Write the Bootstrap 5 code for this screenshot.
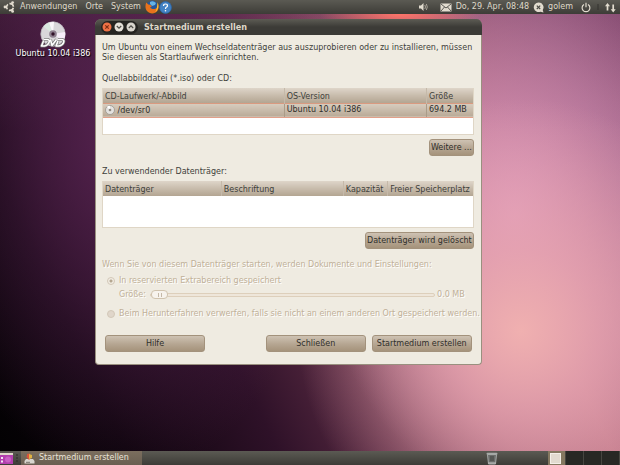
<!DOCTYPE html>
<html lang="de">
<head>
<meta charset="utf-8">
<meta name="viewport" content="width=device-width, initial-scale=1">
<title>Startmedium erstellen</title>
<link href="https://cdn.jsdelivr.net/npm/bootstrap@5.3.0/dist/css/bootstrap.min.css" rel="stylesheet">
<style>
body{font-family:"DejaVu Sans",sans-serif;font-size:8px;line-height:10px;color:#403f3b;
background:
radial-gradient(ellipse 13% 4% at 64.5% 3%,#ff7468 0,#ff746800 100%),
radial-gradient(ellipse 36% 50% at 84% 71%,#f0b0b0 0,#e9a6b0c0 35%,#d88ca000 100%),
radial-gradient(ellipse 32% 60% at 83% 46%,#dc98bc 0,#d08cb0a0 45%,#c07a9c00 100%),
radial-gradient(ellipse 34% 75% at 20% 28%,#562350 0,#56235000 100%),
linear-gradient(180deg,#5e2a5070 0,#5e2a5000 28%),
linear-gradient(65deg,#020102 0,#0d040c 16%,#2e1128 34%,#5c2c44 48%,#9a586c 62%,#b87082 74%,#a06486 90%,#94587e 100%)}
button{font:inherit;color:inherit}
.panel{background:linear-gradient(#5b5a53,#3d3c37);color:#dfd8c9}
.top-panel{height:14px;padding-left:3px}
.top-panel a,.top-panel button{color:inherit;text-decoration:none;background:none;border:0;padding:0}
.bottom-panel{height:15px;border-bottom:1px solid #85827c}
.disc-link{width:95px;padding:7px 0 0 11px;color:#fff;text-shadow:1px 1px 1px #000}
.dialog-box{min-width:0;margin:5px 22.3% 86px 0;background:#efebe1;border:1px solid #99907f;border-top-color:#5e5d55;border-radius:6px 6px 4px 4px}
.title-row{height:16px;margin:-1px -1px 0;border-radius:6px 6px 0 0;background:linear-gradient(#5d5c54,#3c3b37 50%);color:#dfd8c9;padding-left:6px;gap:6px}
.title-row b{font-family:"DejaVu Sans Condensed","DejaVu Sans",sans-serif;font-stretch:condensed;font-size:9px;line-height:12px}
.win-controls{background:#252421;border-radius:7px;gap:1px;padding:1px}
.win-controls button{border:0;padding:0;background:none;width:11px;height:11px}
.dialog-content{padding:8px 7px 12px 6px}
.group-top{margin-top:11px}
.data-frame{background:#fff;border:1px solid #dfd6c6;height:47px;border-top:0}
.data-frame table{table-layout:fixed;margin:0}
.data-frame th,.data-frame td{padding:0 2px;white-space:nowrap;font-weight:400;border-right:1px solid #aa9c88}
.data-frame th{height:15px;padding-top:3px;background:linear-gradient(#ded5c9,#c8bcac 50%,#b3a592);border-right-color:#c5b9a9}
.data-frame td{height:14px;background:linear-gradient(#d8cdbf,#b9aa97);color:#302f2b;border-top:1px solid #d99a80;border-bottom:1px solid #e2a08a}
.data-frame tr>:last-child{border-right:0}
.w-source{width:49%}.w-version{width:38.5%}
.w-drive{width:32%}.w-label{width:33%}.w-cap{width:12%}
.push{border:1px solid #a3927c;border-radius:3px;background:linear-gradient(#cec2b3,#b5a591 55%,#a5937b);color:#302f2b;height:17px;padding:0 1px;white-space:nowrap}
.wide-push{flex:0 1 100px}
.muted-group{color:#c0b098;text-shadow:1px 1px 0 #fff}
.muted-group legend{float:none;font-size:inherit;line-height:inherit;margin:0 0 6px}
.muted-group label{white-space:nowrap}
.dot{appearance:none;width:8px;height:8px;margin:0 4px 0 5px;border-radius:50%;border:1px solid #d3c8b8;background:#e0d6ca;flex:none}
.dot:checked{background:radial-gradient(#b5a791 0 1px,#f1ece3 2px)}
.size-row{padding:0 9px 0 17px;margin:4px 0 9px}
.size-slider{appearance:none;background:none;height:10px;min-width:0;margin:0 2px 0 4px}
.size-slider::-webkit-slider-runnable-track{height:4px;border:1px solid #ddcfbb;border-radius:2px;background:#eee6da}
.size-slider::-webkit-slider-thumb{appearance:none;width:17px;height:9px;margin-top:-4px;border:1px solid #d0c3ae;border-radius:4px;background:linear-gradient(90deg,#0000 6px,#c5b9a8 6px 7px,#0000 7px 9px,#c5b9a8 9px 10px,#0000 10px) center/100% 4px no-repeat,#f7f3ed}
.actions{margin-top:16px;padding:0 2px 0 3px;gap:6px}
.task{width:121px;height:14px;background:linear-gradient(#7b6e5e,#6a5f52);color:#e9e3d7;border:0;padding:0 3px;gap:4px}
.spaces{margin-left:50px}
.space{width:18px;height:14px;background:#282824;border:0;border-right:1px solid #474640;padding:0}
.space.current{background:#857860;padding:1px 2px}
.space.current span{display:block;width:11px;height:11px;background:#e2dacf;border:1px solid #f4efe8}
</style>
<script src="https://cdn.jsdelivr.net/npm/bootstrap@5.3.0/dist/js/bootstrap.bundle.min.js"></script>
</head>
<body class="d-flex flex-column min-vh-100">
<nav class="panel top-panel d-flex align-items-center text-nowrap" aria-label="Hauptmenü">
  <svg width="13" height="12" viewBox="0 0 13 12" class="me-1"><circle cx="7" cy="6" r="3.4" fill="none" stroke="#e2dccf" stroke-width="1.6" stroke-dasharray="5.5 1.62" stroke-dashoffset="-.8"/><circle cx="2" cy="6" r="1.4" fill="#e2dccf"/><circle cx="9.6" cy="1.6" r="1.4" fill="#e2dccf"/><circle cx="9.6" cy="10.4" r="1.4" fill="#e2dccf"/></svg>
  <a href="#">Anwendungen</a><a href="#" class="ms-1 ps-1">Orte</a><a href="#" class="ms-1 ps-1">System</a>
  <button class="d-flex ms-1" aria-label="Firefox"><svg width="14" height="14" viewBox="0 0 14 14"><circle cx="7.3" cy="6.2" r="5.7" fill="#24579c"/><path d="M5 2q3-2 6 1l-1 2-3 1-2-2z" fill="#66b3e4"/><path d="M1.2 2.500C.2 5.500 0 8.800 2 11c2.600 3.200 8 3.200 10.300 0 1.600-2.200 1.600-5 .8-7.500 0 2.500-1 4.500-2.600 5.200-2 .9-4.700.3-5.300-1.400L7 6.200 5 4.800 3.300 4.500z" fill="#e8721c"/><path d="M12.300 2.200c1.800 3 1.300 7.500-2 10q2.500-4.500 2-10z" fill="#fbc433"/></svg></button>
  <button class="d-flex" aria-label="Hilfe"><svg width="13" height="13" viewBox="0 0 13 13"><circle cx="6.500" cy="6.500" r="5.900" fill="#4382c4" stroke="#2c66a8" stroke-width=".8"/><path d="M4.500 5Q4.500 3 6.500 3T8.500 4.800Q8.500 5.800 7.200 6.300 6.500 6.700 6.500 8" fill="none" stroke="#fff" stroke-width="1.200"/><circle cx="6.500" cy="9.800" r=".8" fill="#fff"/></svg></button>
  <div class="ms-auto d-flex align-items-center">
    <button class="d-flex me-2 pe-1" aria-label="Lautstärke"><svg width="10" height="10" viewBox="0 0 10 10"><path d="M1 3.500h2L5.500 1v8L3 6.500H1z" fill="#e2dccf"/><path d="M6.800 3q1.400 2 0 4M8.300 2q2 3 0 6" fill="none" stroke="#b3ada1" stroke-width=".9"/></svg></button>
    <button class="d-flex me-1" aria-label="Nachrichten"><svg width="12" height="9" viewBox="0 0 12 9"><rect x=".5" y=".5" width="11" height="8" rx=".5" fill="#e2dccf"/><path d="M1 1l5 4 5-4M1 8l3.500-4M11 8L7.500 4" fill="none" stroke="#4b4a45" stroke-width=".9"/></svg></button>
    <a href="#">Do, 29. Apr, 08:48</a>
    <button class="d-flex ms-1 me-1" aria-label="Status"><svg width="11" height="11" viewBox="0 0 11 11"><path d="M5.500.5a4.800 4.800 0 1 0 2 9.200L10.500 10.500 9.700 8A4.800 4.800 0 0 0 5.500.5z" fill="#e2dccf"/><path d="M3.800 3.600l3.400 3.400M7.200 3.600L3.800 7" stroke="#4b4a45" stroke-width="1.200"/></svg></button>
    <a href="#">golem</a>
    <button class="d-flex ms-2" aria-label="Ausschalten"><svg width="10" height="11" viewBox="0 0 10 11"><path d="M3 2.400a3.900 3.900 0 1 0 4 0M5 .8v4.500" fill="none" stroke="#e2dccf" stroke-width="1.200"/></svg></button>
    <svg width="10" height="10" viewBox="0 0 10 10"><path d="M6 3h2M6 5h2M6 7h2" stroke="#34332f"/></svg>
    <button class="d-flex ms-1 me-1" aria-label="Netzwerk"><svg width="11" height="11" viewBox="0 0 11 11"><path d="M2.500 8.500V3M8.200 2.500v6" stroke="#e2dccf" stroke-width="1.700"/><path d="M0 4.200L2.500 1 5 4.200zM5.700 7.300L8.200 10.500 10.700 7.300z" fill="#e2dccf"/></svg></button>
  </div>
</nav>

<main class="flex-grow-1 d-flex align-items-start">
  <a href="#" class="disc-link flex-shrink-0 d-flex flex-column align-items-center text-decoration-none text-nowrap">
    <svg width="28" height="28" viewBox="0 0 28 28"><circle cx="14" cy="13" r="12.200" fill="#d9d7da" stroke="#bab7bd" stroke-width=".8"/><path d="M14 13L4.500 5.500A12 12 0 0 1 10 1.600z" fill="#d9e9e0"/><path d="M14 13L10 1.600A12 12 0 0 1 15 1z" fill="#f9f6f9"/><path d="M14 13L26 11a12 12 0 0 1-2 9z" fill="#f6eef9"/><circle cx="14" cy="13" r="3.800" fill="#8d7f8e"/><circle cx="14" cy="13" r="1.700" fill="#301128"/><g fill="none" stroke-linejoin="round"><path d="M5 18.500h3.500q2.500.3 1.500 3T5.500 25H2.500L4.500 20M11.500 18.500l1.500 6 4.500-6M19 18.500h4q2.600.3 1.600 3T20 25h-3l2-5" stroke="#777" stroke-width="3"/><path d="M5 18.500h3.500q2.500.3 1.500 3T5.500 25H2.500L4.500 20M11.500 18.500l1.500 6 4.500-6M19 18.500h4q2.600.3 1.600 3T20 25h-3l2-5" stroke="#fff" stroke-width="1.600"/></g></svg>
    <span>Ubuntu 10.04 i386</span>
  </a>
  <section class="dialog-box flex-grow-1" aria-labelledby="dialog-title">
    <header class="title-row d-flex align-items-center">
      <div class="win-controls d-flex">
        <button class="d-flex" aria-label="Schließen"><svg width="10" height="10" viewBox="0 0 10 10"><circle cx="5" cy="5" r="4.500" fill="#ee7145"/><path d="M3.300 3.300l3.400 3.400M6.700 3.300L3.300 6.700" stroke="#7b2b12" stroke-width="1.100"/></svg></button>
        <button class="d-flex" aria-label="Minimieren"><svg width="10" height="10" viewBox="0 0 10 10"><circle cx="5" cy="5" r="4.500" fill="#e5e1d9"/><path d="M2.800 4L5 6.200 7.200 4" fill="none" stroke="#4c4b46" stroke-width="1.200"/></svg></button>
        <button class="d-flex" aria-label="Maximieren"><svg width="10" height="10" viewBox="0 0 10 10"><circle cx="5" cy="5" r="4.500" fill="#d9d5cd"/><path d="M2.800 6L5 3.800 7.200 6" fill="none" stroke="#4c4b46" stroke-width="1.200"/></svg></button>
      </div>
      <b id="dialog-title">Startmedium erstellen</b>
    </header>
    <div class="dialog-content">
      <p class="mb-0">Um Ubuntu von einem Wechseldatenträger aus auszuprobieren oder zu installieren, müssen Sie diesen als Startlaufwerk einrichten.</p>
      <p class="group-top mb-1" id="source-label">Quellabbilddatei (*.iso) oder CD:</p>
      <div class="data-frame">
        <table class="w-100" aria-labelledby="source-label">
          <thead><tr><th class="w-source">CD-Laufwerk/-Abbild</th><th class="w-version">OS-Version</th><th>Größe</th></tr></thead>
          <tbody><tr><td><svg width="10" height="10" viewBox="0 0 10 10"><circle cx="5" cy="5" r="4.500" fill="#e4e2df" stroke="#918b83" stroke-width=".7"/><path d="M5 5L2 1.700A4 4 0 0 1 5 .9z" fill="#fff"/><circle cx="5" cy="5" r="1.300" fill="#8d877f"/></svg> /dev/sr0</td><td>Ubuntu 10.04 i386</td><td>694.2 MB</td></tr></tbody>
        </table>
      </div>
      <div class="d-flex justify-content-end mt-1"><button class="push">Weitere ...</button></div>
      <p class="group-top mb-1" id="target-label">Zu verwendender Datenträger:</p>
      <div class="data-frame">
        <table class="w-100" aria-labelledby="target-label">
          <thead><tr><th class="w-drive">Datenträger</th><th class="w-label">Beschriftung</th><th class="w-cap">Kapazität</th><th>Freier Speicherplatz</th></tr></thead>
        </table>
      </div>
      <div class="d-flex justify-content-end mt-1"><button class="push">Datenträger wird gelöscht</button></div>
      <fieldset class="muted-group group-top" disabled>
        <legend>Wenn Sie von diesem Datenträger starten, werden Dokumente und Einstellungen:</legend>
        <div class="d-flex align-items-center"><input class="dot" type="radio" name="keep" id="keep-extra" checked><label for="keep-extra">In reservierten Extrabereich gespeichert</label></div>
        <div class="size-row d-flex align-items-center"><label for="size">Größe:</label><input class="size-slider flex-grow-1" type="range" id="size" min="0" max="100" value="0"><output for="size">0.0 MB</output></div>
        <div class="d-flex align-items-center"><input class="dot" type="radio" name="keep" id="keep-none"><label for="keep-none">Beim Herunterfahren verwerfen, falls sie nicht an einem anderen Ort gespeichert werden.</label></div>
      </fieldset>
      <div class="actions d-flex"><button class="push wide-push me-auto">Hilfe</button><button class="push wide-push">Schließen</button><button class="push wide-push">Startmedium erstellen</button></div>
    </div>
  </section>
</main>
<footer class="panel bottom-panel d-flex align-items-center">
  <button class="d-flex border-0 p-0 bg-transparent" aria-label="Desktop anzeigen"><svg width="14" height="13" viewBox="0 0 14 13"><rect y="1" width="13" height="11" fill="#b23fae"/><rect y="1" width="13" height="2" fill="#e0d9cb"/><circle cx="8" cy="7.500" r="3" fill="#c95fc4"/><path d="M1 5h2v2H1zM1 8.500h2v2H1z" fill="#f4e4f3"/></svg></button>
  <svg width="7" height="12" viewBox="0 0 7 12"><path d="M2 3h2M2 6h2M2 9h2" stroke="#2b2a27"/></svg>
  <button class="task d-flex align-items-center text-nowrap"><svg width="11" height="11" viewBox="0 0 11 11"><path d="M2 6h7l1.500 2v2.500h-10V8z" fill="#d9d6cf"/><path d="M2 9.300h4" stroke="#77736b"/><path d="M3 1l3-.5v3h2L5 7 2 3.500h1z" fill="#d8543b"/><path d="M5 1l3 1v3L5 6z" fill="#dfb342"/></svg>Startmedium erstellen</button>
  <button class="d-flex ms-auto border-0 p-0 bg-transparent" aria-label="Papierkorb"><svg width="12" height="13" viewBox="0 0 12 13"><path d="M1.500 2.500l1 9.500h7l1-9.500z" fill="#6b6d6b" stroke="#a6a9a7"/><rect x=".5" y=".7" width="11" height="2" rx="1" fill="#a6a9a7"/><path d="M4 4v5h4V4" fill="#555754"/><path d="M2.500 11h7" stroke="#c5c8c6"/></svg></button>
  <div class="spaces d-flex"><button class="space current" aria-label="Arbeitsfläche 1"><span></span></button><button class="space" aria-label="Arbeitsfläche 2"></button><button class="space" aria-label="Arbeitsfläche 3"></button><button class="space" aria-label="Arbeitsfläche 4"></button></div>
</footer>
</body>
</html>
